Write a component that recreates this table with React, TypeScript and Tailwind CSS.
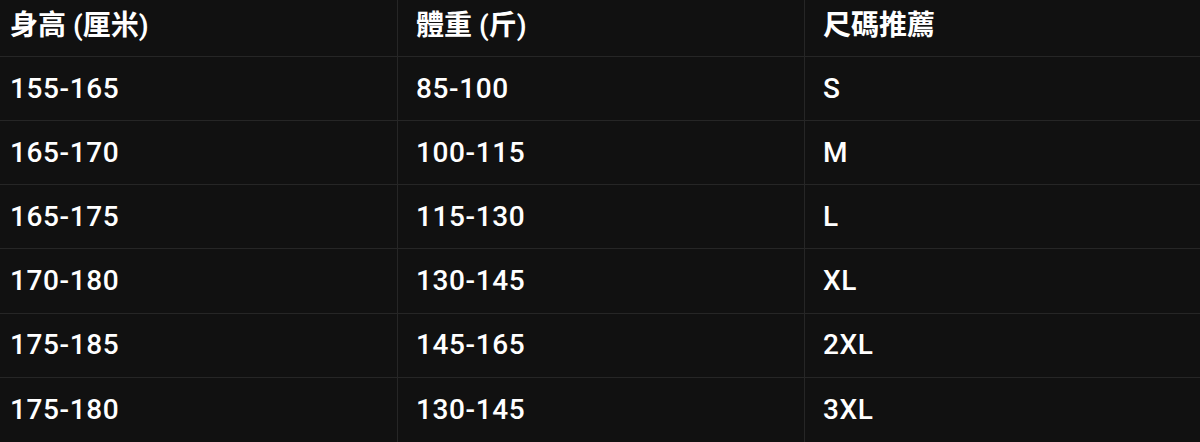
const headers = ["身高 (厘米)", "體重 (斤)", "尺碼推薦"];

const rows: [string, string, string][] = [
  ["155-165", "85-100", "S"],
  ["165-170", "100-115", "M"],
  ["165-175", "115-130", "L"],
  ["170-180", "130-145", "XL"],
  ["175-185", "145-165", "2XL"],
  ["175-180", "130-145", "3XL"],
];

const font = {
  fontFamily: 'Roboto, "Noto Sans CJK TC", sans-serif',
};

export default function App() {
  const cell = (col: number, last: boolean) =>
    [
      "flex items-center text-white",
      col === 0 ? "pl-[10px]" : "pl-[18px]",
      col < 2 ? "border-r border-[#262626]" : "",
      last ? "" : "border-b border-[#262626]",
    ].join(" ");

  return (
    <div
      className="grid h-[442px] w-[1200px] grid-cols-[398px_407px_1fr] grid-rows-[57px_repeat(6,1fr)] bg-[#111111]"
      style={font}
    >
      {headers.map((h, i) => (
        <div key={h} className={`${cell(i, false)} pb-[4px] text-[28px] font-semibold`}>
          {h}
        </div>
      ))}
      {rows.map((r, ri) =>
        r.map((v, ci) => (
          <div
            key={`${ri}-${ci}`}
            className={`${cell(ci, ri === rows.length - 1)} text-[28px] font-medium tracking-[0.6px]`}
          >
            {v}
          </div>
        ))
      )}
    </div>
  );
}
